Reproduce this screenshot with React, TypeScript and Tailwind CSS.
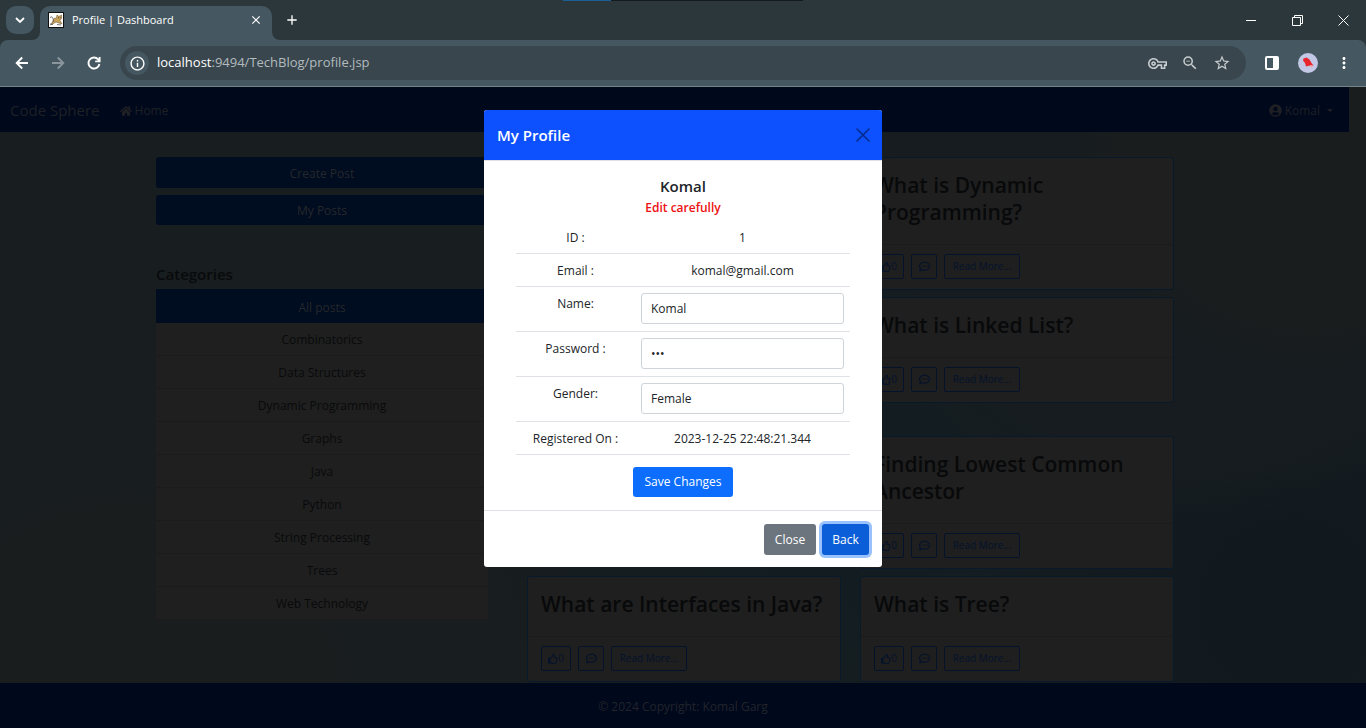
import React from "react";
import {
  MdInfoOutline,
  MdOutlineVpnKey,
  MdZoomOut,
  MdStarBorder,
  MdMoreVert,
  MdAdd,
  MdClose,
} from "react-icons/md";
import { FaHome, FaUserCircle, FaRegThumbsUp, FaRegCommentDots } from "react-icons/fa";

const categories = [
  "Combinatorics",
  "Data Structures",
  "Dynamic Programming",
  "Graphs",
  "Java",
  "Python",
  "String Processing",
  "Trees",
  "Web Technology",
];

function Favicon() {
  return (
    <svg width="16" height="16" viewBox="0 0 16 16" aria-hidden="true">
      <rect x="0.5" y="0.5" width="15" height="15" fill="#fff" stroke="#111" />
      <path d="M6 6.5L8.500 6L9 3L10.500 4.200L12 4L13.500 3L13.500 6.500L12 8.500L14 12L11 11L8 10L5.500 11.500L2.500 13L4.500 10Z" fill="#c9a25a" stroke="#7a6235" strokeWidth=".6" />
      <path d="M2 5.500Q4 3.500 5 6.500T5 10M2 12L5 12.500M9 12.500L13 13" stroke="#555" strokeWidth=".8" fill="none" />
      <path d="M10 5.800h.8M12 5.800h.6" stroke="#222" strokeWidth=".9" />
    </svg>
  );
}

function TabStrip() {
  return (
    <div className="relative flex h-10 items-end bg-[#2c373c] pl-1.5 text-white">
      <div className="absolute left-[563px] top-0 flex h-px">
        <span className="w-12 bg-[#1b5f94]" />
        <span className="w-48 bg-[#161c1e]" />
      </div>
      <button aria-label="Search tabs" className="mb-1.5 flex size-7 items-center justify-center rounded-[10px] bg-[#455760]">
        <svg width="10" height="6" fill="none" stroke="#fff" strokeWidth="1.8"><path d="M1 1L5 5L9 1" /></svg>
      </button>
      <div className="relative ml-1.5 flex h-[34px] w-[232px] items-center rounded-t-[10px] bg-[#455760] pb-1.5 pl-2 pr-[9px]">
        <svg className="absolute -left-2 bottom-0" width="8" height="8" aria-hidden="true">
          <path d="M8 0V8H0A8 8 0 0 0 8 0Z" fill="#455760" />
        </svg>
        <svg className="absolute -right-2 bottom-0" width="8" height="8" aria-hidden="true">
          <path d="M0 0V8H8A8 8 0 0 1 0 0Z" fill="#455760" />
        </svg>
        <Favicon />
        <span className="ml-2 flex-1 text-[11px]">Profile | Dashboard</span>
        <button aria-label="Close tab">
          <MdClose size={14} />
        </button>
      </div>
      <button aria-label="New tab" className="mb-3 ml-3">
        <MdAdd size={16} />
      </button>
      <div className="ml-auto mb-3.5 flex items-center gap-[35px] pr-[17px]">
        <button aria-label="Minimize">
          <svg width="11" height="11"><path d="M0 5.5H10" stroke="#fff" /></svg>
        </button>
        <button aria-label="Restore">
          <svg width="11" height="11" fill="none" stroke="#fff"><path d="M.5 2.5H8.500V10.500H.5ZM2.500 2.500V.5H10.500V8.500H8.500" /></svg>
        </button>
        <button aria-label="Close window">
          <svg width="11" height="11" stroke="#fff"><path d="M.5.5L10.500 10.500M10.500.5L.5 10.500" /></svg>
        </button>
      </div>
    </div>
  );
}

function Toolbar() {
  return (
    <div className="bg-[#2c373c]">
      <div className="flex h-[47px] items-center rounded-t-lg border-b border-[#75848b] bg-[#455760] pl-3.5 pr-[13px] text-white">
        <button aria-label="Back" className="mr-5">
          <svg width="16" height="16" fill="none" stroke="#fff" strokeWidth="1.9"><path d="M14 8H3M8.200 2.500L2.700 8L8.200 13.500" /></svg>
        </button>
        <button aria-label="Forward" className="mr-5">
          <svg width="16" height="16" fill="none" stroke="#8a969c" strokeWidth="1.9"><path d="M2 8H13M7.800 2.500L13.300 8L7.800 13.500" /></svg>
        </button>
        <button aria-label="Reload" className="mr-[18px]">
          <svg width="16" height="16" fill="none" stroke="#fff" strokeWidth="1.9"><path d="M13.400 9A5.500 5.500 0 1 1 12.200 4.500L13.500 6M13.600 2V6.400H9.200" /></svg>
        </button>
        <div className="flex h-[34px] flex-1 items-center rounded-full bg-[#39464d] pl-[5px] pr-[15px]">
          <button aria-label="View site information" className="flex size-6 items-center justify-center rounded-full bg-[#455760]">
            <MdInfoOutline size={17} />
          </button>
          <span className="ml-2 flex-1 text-[13px] text-[#b3bbbf]">
            <span className="text-white">localhost</span>:9494/TechBlog/profile.jsp
          </span>
          <div className="flex items-center gap-3.5 text-[#c6cccf]">
            <button aria-label="Passwords"><MdOutlineVpnKey size={19} /></button>
            <button aria-label="Zoom"><MdZoomOut size={18} /></button>
            <button aria-label="Bookmark"><MdStarBorder size={18} /></button>
          </div>
        </div>
        <button aria-label="Side panel" className="ml-[19px]">
          <svg width="14" height="14" viewBox="0 0 14 14"><rect x="1" y="1" width="12" height="12" rx="1" fill="none" stroke="#fff" strokeWidth="2" /><rect x="8" y="1" width="5" height="12" fill="#fff" /></svg>
        </button>
        <button aria-label="Account" className="ml-[19px]">
          <svg width="20" height="20" viewBox="0 0 20 20"><circle cx="10" cy="10" r="10" fill="#c3c8e6" /><path d="M5.500 5.500L8.500 4.500L11.500 6.500L13.500 10L15.500 12.500L12 12.500L8 13.500L7 10L5 7.500Z" fill="#e8262d" /><path d="M12 12L15.500 13L12.500 14.500Z" fill="#f5a3a0" /></svg>
        </button>
        <button aria-label="Menu" className="ml-[17px]"><MdMoreVert size={18} /></button>
      </div>
    </div>
  );
}

function PostCard({ title, className = "" }: { title: string; className?: string }) {
  return (
    <article className={`self-start rounded-[3px] border border-[#07192b] bg-[#1f1f1f] ${className}`}>
      <h3 className="px-[13px] pb-[18px] pt-[14px] text-[21px] font-semibold leading-[27px] text-[#08090a]">{title}</h3>
      <div className="flex gap-[7px] border-t border-[#1b1b1b] px-[13px] pb-2.5 pt-[9px] text-[10px] text-[#04122c]">
        <button className="flex h-[25px] w-[30px] items-center justify-center rounded-[2px] border border-[#04122c]">
          <FaRegThumbsUp size={10} />0
        </button>
        <button aria-label="Comments" className="flex h-[25px] w-[26px] items-center justify-center rounded-[2px] border border-[#04122c]">
          <FaRegCommentDots size={11} />
        </button>
        <a href="#" className="flex h-[25px] w-[76px] items-center justify-center rounded-[2px] border border-[#04122c]">
          Read More...
        </a>
      </div>
    </article>
  );
}

function Sidebar() {
  return (
    <aside className="w-[332px] shrink-0 text-center text-[12px]">
      <button className="block h-[31px] w-full rounded-[3px] bg-[#000c1f] pt-0.5 text-[#25282c]">Create Post</button>
      <button className="mt-[7px] block h-[30px] w-full rounded-[3px] bg-[#000c1f] pt-0.5 text-[#25282c]">My Posts</button>
      <h5 className="mb-[5px] mt-10 text-left text-[15px] font-semibold leading-[19px] text-[#080a0c]">Categories</h5>
      <nav>
        <a href="#" className="block bg-[#000c1f] pb-[5px] pt-2 leading-[21px] text-[#25282c]">All posts</a>
        {categories.map((name) => (
          <a key={name} href="#" className="block border-b border-[#1b1b1b] bg-[#1f1f1f] pb-[5px] pt-[7px] leading-5 text-[#090a0b]">
            {name}
          </a>
        ))}
      </nav>
    </aside>
  );
}

const inputClass =
  "block h-[31px] w-full rounded-[3px] border border-[#ced4da] px-[9px] text-[12px] text-[#212529]";

function ProfileDialog() {
  return (
    <div className="absolute inset-0 flex items-start justify-center pt-[23px]">
      <div role="dialog" aria-labelledby="profile-title" className="w-full max-w-[398px] overflow-hidden rounded-[3px] bg-white text-[12px] text-[#212529]">
        <div className="flex h-[51px] items-center justify-between border-b border-[#dee2e6] bg-[#0d50fd] px-[13px]">
          <h5 id="profile-title" className="text-[15px] font-semibold text-white">My Profile</h5>
          <button aria-label="Close dialog" className="-mr-px">
            <svg width="14" height="14" stroke="#072b8c" strokeWidth="1.6" strokeLinecap="round"><path d="M1 1L13 13M13 1L1 13" /></svg>
          </button>
        </div>
        <form className="px-8 pb-[13px] pt-4 text-center" onSubmit={(e) => e.preventDefault()}>
          <h5 className="text-[15px] font-semibold leading-[19px]">Komal</h5>
          <p className="mb-[3px] mt-0.5 font-semibold leading-5 text-[#ee1111]">Edit carefully</p>
          <table className="w-full table-fixed">
            <colgroup>
              <col className="w-[119px]" />
              <col />
            </colgroup>
            <tbody className="align-top leading-5 [&_td]:border-b [&_td]:border-[#dee2e6] [&_td]:px-1.5 [&_td]:pt-[7px] [&_td:has(input)]:pt-1.5 [&_th]:border-b [&_th]:border-[#dee2e6] [&_th]:pt-[7px] [&_th]:font-normal">
              <tr className="h-8"><th scope="row">ID :</th><td>1</td></tr>
              <tr className="h-[33px]"><th scope="row">Email :</th><td>komal@gmail.com</td></tr>
              <tr className="h-[45px]">
                <th scope="row"><label htmlFor="name">Name:</label></th>
                <td><input id="name" type="text" defaultValue="Komal" className={inputClass} /></td>
              </tr>
              <tr className="h-[45px]">
                <th scope="row"><label htmlFor="password">Password :</label></th>
                <td><input id="password" type="password" defaultValue="123" className={inputClass} /></td>
              </tr>
              <tr className="h-[45px]">
                <th scope="row"><label htmlFor="gender">Gender:</label></th>
                <td><input id="gender" type="text" defaultValue="Female" className={inputClass} /></td>
              </tr>
              <tr className="h-[33px]"><th scope="row">Registered On :</th><td>2023-12-25 22:48:21.344</td></tr>
            </tbody>
          </table>
          <button type="submit" className="mt-3 h-[30px] w-[100px] rounded-[3px] bg-[#0d6efd] pt-px text-white">Save Changes</button>
        </form>
        <div className="flex justify-end gap-1.5 border-t border-[#dee2e6] px-[13px] pb-3 pt-[13px] text-white">
          <button className="h-[31px] w-[52px] rounded-[3px] bg-[#6c757d] pt-0.5">Close</button>
          <button className="h-[31px] w-[47px] rounded-[3px] bg-[#0b5ed7] pt-0.5 ring-[3px] ring-[#98c1fe]">Back</button>
        </div>
      </div>
    </div>
  );
}

export default function App() {
  return (
    <div className="flex min-h-screen flex-col font-['Open_Sans','Noto_Sans',sans-serif]">
      <header>
        <TabStrip />
        <Toolbar />
      </header>
      <div className="relative flex flex-1 flex-col bg-[#181d1f] bg-[radial-gradient(circle_at_1310px_50px,#1a1d1e_0,#1a1d1e_180px,#1a1d1e00_240px),radial-gradient(circle_at_130px_630px,#1a1d1e_0,#1a1d1e_190px,#1a1d1e00_230px),radial-gradient(circle_at_1190px_90px,#161c1f_0,#161c1f_290px,#161c1f00_350px),radial-gradient(circle_at_1290px_520px,#11191f_0,#11191f_80px,#11191f00_340px),radial-gradient(circle_at_860px_400px,#131d21_0,#131d21_100px,#131d2100_380px)]">
        <div className="pr-[17px]">
          <nav className="flex h-[45px] items-center bg-[#00081c] px-2.5 pt-0.5 text-[12px] text-[#1e2024]">
            <a href="#" className="mr-5 text-[15px]">Code Sphere</a>
            <a href="#" className="flex items-center gap-[3px]"><FaHome size={12} />Home</a>
            <button className="ml-auto mr-1.5 flex items-center gap-[3px]">
              <FaUserCircle size={13} />Komal
              <svg className="ml-1" width="6" height="4" aria-hidden="true"><path d="M0 0H6L3 3Z" fill="currentColor" /></svg>
            </button>
          </nav>
        </div>
        <main className="flex-1 pr-[17px] pt-[25px]">
          <div className="mx-auto flex w-full max-w-[1037px] gap-[39px] pr-[19px]">
            <Sidebar />
            <section className="grid flex-1 auto-rows-min grid-cols-2 grid-rows-[133px_132px_133px] gap-x-[19px] gap-y-[7px]">
              <PostCard className="col-start-2" title="What is Dynamic Programming?" />
              <PostCard className="col-start-2" title="What is Linked List?" />
              <PostCard className="col-start-2" title="Finding Lowest Common Ancestor" />
              <PostCard title="What are Interfaces in Java?" />
              <PostCard title="What is Tree?" />
            </section>
          </div>
        </main>
        <footer className="flex h-[45px] items-center justify-center bg-[#00081c] pt-0.5 text-[12px] text-[#22242a]">
          © 2024 Copyright: Komal Garg
        </footer>
        <ProfileDialog />
      </div>
    </div>
  );
}
